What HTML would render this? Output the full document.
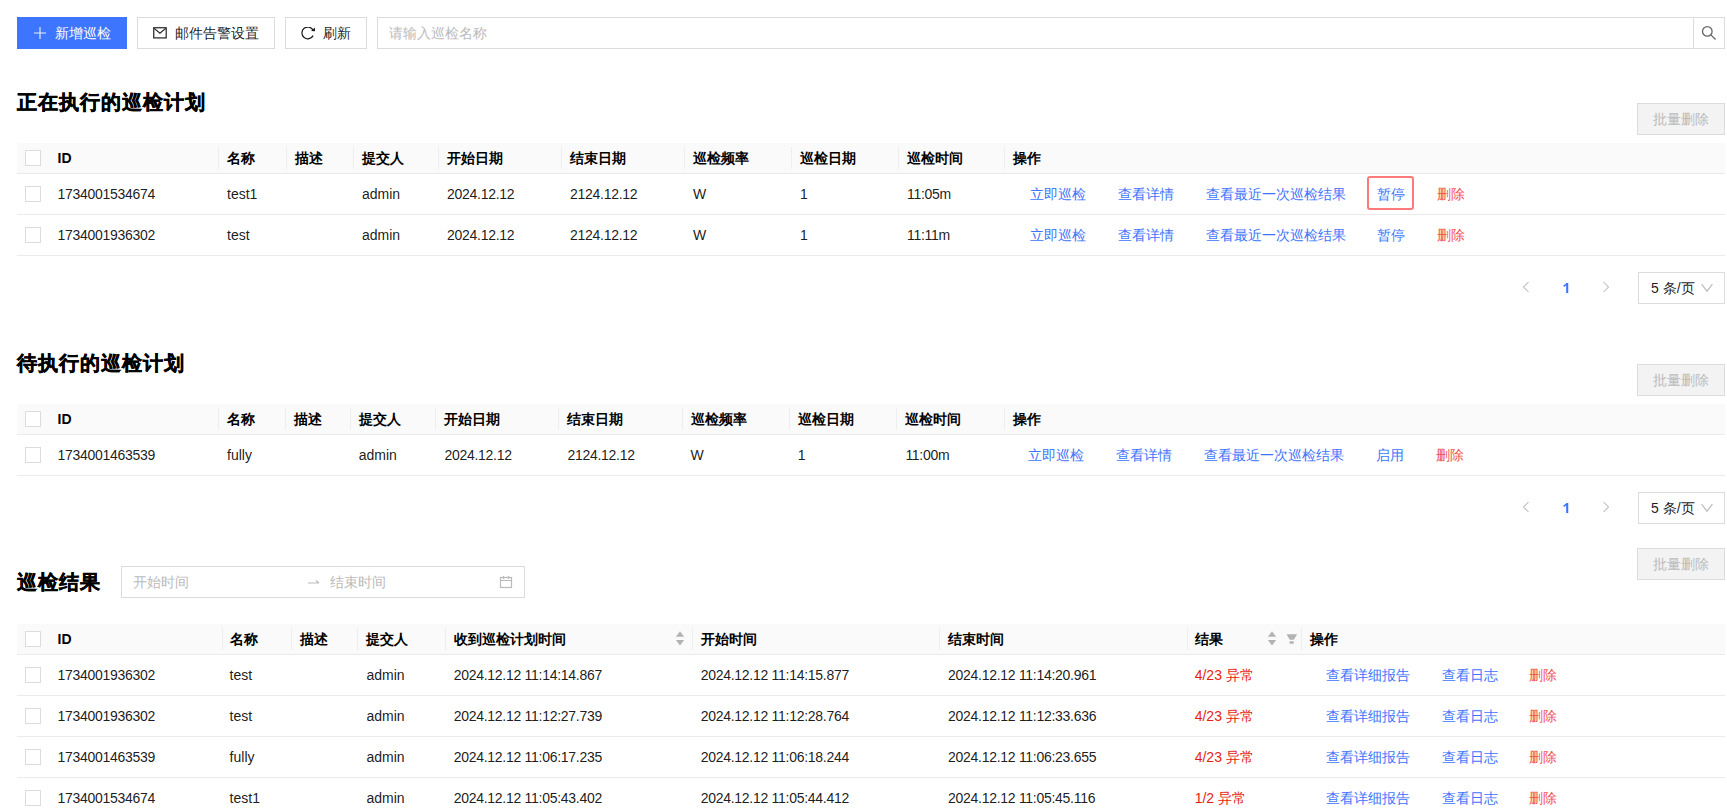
<!DOCTYPE html>
<html><head><meta charset="utf-8"><style>
*{box-sizing:border-box;margin:0;padding:0}
html,body{width:1727px;height:812px;overflow:hidden;background:#fff}
body{font-family:"Liberation Sans",sans-serif;font-size:14px;color:rgba(0,0,0,.9);position:relative}
.a{position:absolute;white-space:nowrap}
.btn{position:absolute;height:32px;border:1px solid #dcdcdc;background:#fff}
.primary{background:#3d75fe;border-color:#3d75fe;color:#fff}
.dis{background:#f3f3f3;border-color:#dcdcdc;color:#bbb}
.title{position:absolute;left:17.4px;font-size:20px;font-weight:bold;color:#000;white-space:nowrap;line-height:28px;letter-spacing:1px;-webkit-text-stroke:0.4px #000}
.hd{position:absolute;left:17px;width:1708px;height:31px;background:#fafafa;border-bottom:1px solid #ebebeb}
.row{position:absolute;left:17px;width:1708px;height:41px;border-bottom:1px solid #ebebeb}
.t{position:absolute;white-space:nowrap;line-height:20px}
.hd .t{font-weight:bold;color:#000;top:5px}
.row .t{top:10px}
.sep{position:absolute;top:4px;width:1px;height:22px;background:#eeeeee}
.cb{position:absolute;left:8px;width:16px;height:16px;border:1px solid #dcdcdc;border-radius:0;background:#fff}
.hd .cb{top:7px}
.row .cb{top:12px}
.lk{color:#3d75fe}
.rd{color:#f0514f}
.er{color:#e61e10}
.n{letter-spacing:-0.28px}
</style></head><body>
<div class="btn primary" style="left:17px;top:17px;width:110px">
<svg class="a" style="left:15px;top:8px" width="14" height="14" viewBox="0 0 14 14"><path d="M7 1v12M1 7h12" stroke="rgba(255,255,255,.88)" stroke-width="1.15"/></svg>
<span class="a" style="left:37px;top:7px">新增巡检</span></div>
<div class="btn" style="left:137px;top:17px;width:138px">
<svg class="a" style="left:15px;top:9px" width="15" height="13" viewBox="0 0 15 13"><rect x="0.75" y="0.75" width="12.45" height="10.15" fill="none" stroke="#222" stroke-width="1.2"/><path d="M1.2 1.4L6.95 6.3 12.7 1.4" fill="none" stroke="#222" stroke-width="1.2"/></svg>
<span class="a" style="left:37px;top:7px">邮件告警设置</span></div>
<div class="btn" style="left:285px;top:17px;width:82px">
<svg class="a" style="left:15px;top:9px" width="15" height="14" viewBox="0 0 15 14"><path d="M12.1 8.6A5.9 5.9 0 1 1 12.1 3.3" fill="none" stroke="#1a1a1a" stroke-width="1.25"/><path d="M10.1 4L14 4.2 13.9 0.5z" fill="#1a1a1a"/></svg>
<span class="a" style="left:37px;top:7px">刷新</span></div>
<div class="btn" style="left:377px;top:17px;width:1348px">
<span class="a" style="left:11px;top:7px;color:#bbb">请输入巡检名称</span>
<div class="a" style="left:1315px;top:0;width:1px;height:30px;background:#dcdcdc"></div>
<svg class="a" style="left:1322px;top:7px" width="18" height="18" viewBox="0 0 18 18"><circle cx="7.3" cy="6.4" r="4.8" fill="none" stroke="#666" stroke-width="1.3"/><path d="M10.8 9.9l4.8 4.6" stroke="#666" stroke-width="1.3"/></svg>
</div>

<div class="title" style="top:88px">正在执行的巡检计划</div>
<div class="btn dis" style="left:1637px;top:103px;width:88px"><span class="a" style="left:15px;top:7px">批量删除</span></div>
<div class="hd" style="top:143px"><div class="cb"></div><div class="sep" style="left:201px"></div><div class="sep" style="left:269px"></div><div class="sep" style="left:336px"></div><div class="sep" style="left:421px"></div><div class="sep" style="left:544px"></div><div class="sep" style="left:667px"></div><div class="sep" style="left:774px"></div><div class="sep" style="left:881px"></div><div class="sep" style="left:987px"></div><span class="t" style="left:40.5px">ID</span><span class="t" style="left:210px">名称</span><span class="t" style="left:278px">描述</span><span class="t" style="left:345px">提交人</span><span class="t" style="left:430px">开始日期</span><span class="t" style="left:553px">结束日期</span><span class="t" style="left:676px">巡检频率</span><span class="t" style="left:783px">巡检日期</span><span class="t" style="left:890px">巡检时间</span><span class="t" style="left:996px">操作</span></div>
<div class="row" style="top:174px"><div class="cb"></div><span class="t n" style="left:40.5px">1734001534674</span><span class="t " style="left:210px">test1</span><span class="t " style="left:345px">admin</span><span class="t n" style="left:430px">2024.12.12</span><span class="t n" style="left:553px">2124.12.12</span><span class="t " style="left:676px">W</span><span class="t n" style="left:783px">1</span><span class="t n" style="left:890px">11:05m</span><span class="t lk" style="left:1013px">立即巡检</span><span class="t lk" style="left:1101px">查看详情</span><span class="t lk" style="left:1188.6px">查看最近一次巡检结果</span><span class="t lk" style="left:1360px">暂停</span><span class="t rd" style="left:1420px">删除</span></div>
<div class="row" style="top:215px"><div class="cb"></div><span class="t n" style="left:40.5px">1734001936302</span><span class="t " style="left:210px">test</span><span class="t " style="left:345px">admin</span><span class="t n" style="left:430px">2024.12.12</span><span class="t n" style="left:553px">2124.12.12</span><span class="t " style="left:676px">W</span><span class="t n" style="left:783px">1</span><span class="t n" style="left:890px">11:11m</span><span class="t lk" style="left:1013px">立即巡检</span><span class="t lk" style="left:1101px">查看详情</span><span class="t lk" style="left:1188.6px">查看最近一次巡检结果</span><span class="t lk" style="left:1360px">暂停</span><span class="t rd" style="left:1420px">删除</span></div>
<div class="a" style="left:1367px;top:176px;width:47px;height:34px;border:2px solid #fb7b7b;border-radius:3px"></div>
<svg class="a" style="left:1521px;top:281px" width="10" height="12" viewBox="0 0 10 12"><path d="M7.5 1L2.5 6l5 5" fill="none" stroke="#bbb" stroke-width="1.05"/></svg>
<svg class="a" style="left:1562px;top:282px" width="8" height="13" viewBox="0 0 8 13"><path d="M5.2 1v10.1" stroke="#3d75fe" stroke-width="2.1"/><path d="M1.6 4.3L5.2 1.6" stroke="#3d75fe" stroke-width="1.6"/></svg>
<svg class="a" style="left:1601px;top:281px" width="10" height="12" viewBox="0 0 10 12"><path d="M2.5 1l5 5-5 5" fill="none" stroke="#bbb" stroke-width="1.05"/></svg>
<div class="btn" style="left:1638px;top:272px;width:87px"><span class="a" style="left:12px;top:5px;line-height:20px">5 条/页</span>
<svg class="a" style="left:62px;top:10px" width="12" height="10" viewBox="0 0 12 10"><path d="M0.6 1.2L6 8.2 11.4 1.2" fill="none" stroke="#bbb" stroke-width="1.15"/></svg></div>
<div class="title" style="top:349px">待执行的巡检计划</div>
<div class="btn dis" style="left:1637px;top:364px;width:88px"><span class="a" style="left:15px;top:7px">批量删除</span></div>
<div class="hd" style="top:404px"><div class="cb"></div><div class="sep" style="left:201px"></div><div class="sep" style="left:267.5px"></div><div class="sep" style="left:332.7px"></div><div class="sep" style="left:418.4px"></div><div class="sep" style="left:541.4px"></div><div class="sep" style="left:664.5px"></div><div class="sep" style="left:771.7px"></div><div class="sep" style="left:879.4px"></div><div class="sep" style="left:986.5px"></div><span class="t" style="left:40.5px">ID</span><span class="t" style="left:210px">名称</span><span class="t" style="left:276.5px">描述</span><span class="t" style="left:341.7px">提交人</span><span class="t" style="left:427.4px">开始日期</span><span class="t" style="left:550.4px">结束日期</span><span class="t" style="left:673.5px">巡检频率</span><span class="t" style="left:780.7px">巡检日期</span><span class="t" style="left:888.4px">巡检时间</span><span class="t" style="left:995.5px">操作</span></div>
<div class="row" style="top:435px"><div class="cb"></div><span class="t n" style="left:40.5px">1734001463539</span><span class="t " style="left:210px">fully</span><span class="t " style="left:341.7px">admin</span><span class="t n" style="left:427.4px">2024.12.12</span><span class="t n" style="left:550.4px">2124.12.12</span><span class="t " style="left:673.5px">W</span><span class="t n" style="left:780.7px">1</span><span class="t n" style="left:888.4px">11:00m</span><span class="t lk" style="left:1011.4px">立即巡检</span><span class="t lk" style="left:1099.4px">查看详情</span><span class="t lk" style="left:1187px">查看最近一次巡检结果</span><span class="t lk" style="left:1358.8px">启用</span><span class="t rd" style="left:1418.7px">删除</span></div>
<svg class="a" style="left:1521px;top:501px" width="10" height="12" viewBox="0 0 10 12"><path d="M7.5 1L2.5 6l5 5" fill="none" stroke="#bbb" stroke-width="1.05"/></svg>
<svg class="a" style="left:1562px;top:502px" width="8" height="13" viewBox="0 0 8 13"><path d="M5.2 1v10.1" stroke="#3d75fe" stroke-width="2.1"/><path d="M1.6 4.3L5.2 1.6" stroke="#3d75fe" stroke-width="1.6"/></svg>
<svg class="a" style="left:1601px;top:501px" width="10" height="12" viewBox="0 0 10 12"><path d="M2.5 1l5 5-5 5" fill="none" stroke="#bbb" stroke-width="1.05"/></svg>
<div class="btn" style="left:1638px;top:492px;width:87px"><span class="a" style="left:12px;top:5px;line-height:20px">5 条/页</span>
<svg class="a" style="left:62px;top:10px" width="12" height="10" viewBox="0 0 12 10"><path d="M0.6 1.2L6 8.2 11.4 1.2" fill="none" stroke="#bbb" stroke-width="1.15"/></svg></div>
<div class="btn dis" style="left:1637px;top:548px;width:88px"><span class="a" style="left:15px;top:7px">批量删除</span></div>
<div class="title" style="top:568px">巡检结果</div>
<div class="btn" style="left:121px;top:566px;width:404px">
<span class="a" style="left:11px;top:5px;color:#bbb;line-height:20px">开始时间</span>
<svg class="a" style="left:185px;top:10px" width="14" height="10" viewBox="0 0 14 10"><path d="M1 6h11M9 3.5l3 2.5" fill="none" stroke="#bbb" stroke-width="1.2"/></svg>
<span class="a" style="left:208px;top:5px;color:#bbb;line-height:20px">结束时间</span>
<svg class="a" style="left:377px;top:8px" width="14" height="14" viewBox="0 0 14 14"><rect x="1.5" y="2.5" width="11" height="10" fill="none" stroke="#bbb" stroke-width="1.2"/><path d="M1.5 5.5h11M4.5 1v3M9.5 1v3" fill="none" stroke="#bbb" stroke-width="1.2"/></svg>
</div>
<div class="hd" style="top:624px"><div class="cb"></div><div class="sep" style="left:204.5px"></div><div class="sep" style="left:274.2px"></div><div class="sep" style="left:340.3px"></div><div class="sep" style="left:428.2px"></div><div class="sep" style="left:675px"></div><div class="sep" style="left:922.3px"></div><div class="sep" style="left:1169.6px"></div><div class="sep" style="left:1284.4px"></div><span class="t" style="left:40.5px">ID</span><span class="t" style="left:212.6px">名称</span><span class="t" style="left:283px">描述</span><span class="t" style="left:349.4px">提交人</span><span class="t" style="left:436.7px">收到巡检计划时间</span><span class="t" style="left:683.7px">开始时间</span><span class="t" style="left:931px">结束时间</span><span class="t" style="left:1177.7px">结果</span><span class="t" style="left:1292.7px">操作</span></div>
<div class="row" style="top:655px"><div class="cb"></div><span class="t n" style="left:40.5px">1734001936302</span><span class="t " style="left:212.6px">test</span><span class="t " style="left:349.4px">admin</span><span class="t n" style="left:436.7px">2024.12.12 11:14:14.867</span><span class="t n" style="left:683.7px">2024.12.12 11:14:15.877</span><span class="t n" style="left:931px">2024.12.12 11:14:20.961</span><span class="t er" style="left:1177.7px">4/23 异常</span><span class="t lk" style="left:1309px">查看详细报告</span><span class="t lk" style="left:1424.8px">查看日志</span><span class="t rd" style="left:1512px">删除</span></div>
<div class="row" style="top:696px"><div class="cb"></div><span class="t n" style="left:40.5px">1734001936302</span><span class="t " style="left:212.6px">test</span><span class="t " style="left:349.4px">admin</span><span class="t n" style="left:436.7px">2024.12.12 11:12:27.739</span><span class="t n" style="left:683.7px">2024.12.12 11:12:28.764</span><span class="t n" style="left:931px">2024.12.12 11:12:33.636</span><span class="t er" style="left:1177.7px">4/23 异常</span><span class="t lk" style="left:1309px">查看详细报告</span><span class="t lk" style="left:1424.8px">查看日志</span><span class="t rd" style="left:1512px">删除</span></div>
<div class="row" style="top:737px"><div class="cb"></div><span class="t n" style="left:40.5px">1734001463539</span><span class="t " style="left:212.6px">fully</span><span class="t " style="left:349.4px">admin</span><span class="t n" style="left:436.7px">2024.12.12 11:06:17.235</span><span class="t n" style="left:683.7px">2024.12.12 11:06:18.244</span><span class="t n" style="left:931px">2024.12.12 11:06:23.655</span><span class="t er" style="left:1177.7px">4/23 异常</span><span class="t lk" style="left:1309px">查看详细报告</span><span class="t lk" style="left:1424.8px">查看日志</span><span class="t rd" style="left:1512px">删除</span></div>
<div class="row" style="top:778px"><div class="cb"></div><span class="t n" style="left:40.5px">1734001534674</span><span class="t " style="left:212.6px">test1</span><span class="t " style="left:349.4px">admin</span><span class="t n" style="left:436.7px">2024.12.12 11:05:43.402</span><span class="t n" style="left:683.7px">2024.12.12 11:05:44.412</span><span class="t n" style="left:931px">2024.12.12 11:05:45.116</span><span class="t er" style="left:1177.7px">1/2 异常</span><span class="t lk" style="left:1309px">查看详细报告</span><span class="t lk" style="left:1424.8px">查看日志</span><span class="t rd" style="left:1512px">删除</span></div>
<svg class="a" style="left:675px;top:630px" width="10" height="17" viewBox="0 0 10 17"><path d="M0.9 6.75L5 1.2l4.1 5.55z M0.9 10.1h8.2L5 15.4z" fill="#b3b3b3"/></svg>
<svg class="a" style="left:1267px;top:630px" width="10" height="17" viewBox="0 0 10 17"><path d="M0.9 6.75L5 1.2l4.1 5.55z M0.9 10.1h8.2L5 15.4z" fill="#b3b3b3"/></svg>
<svg class="a" style="left:1286px;top:634px" width="12" height="11" viewBox="0 0 12 11"><path d="M0.6 0.2H11.1L7.9 5.8H3.7z M3.6 7.2h4.1v2.6h-4.1z" fill="#b3b3b3"/></svg>
</body></html>
